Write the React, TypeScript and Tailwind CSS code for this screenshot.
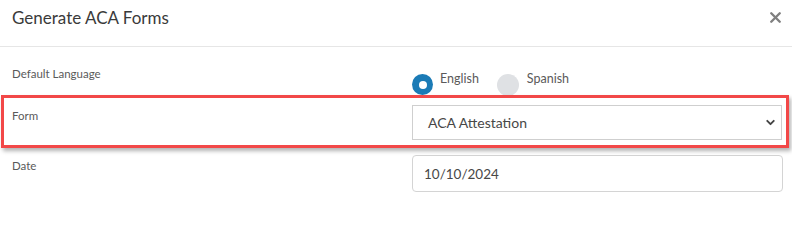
import { ChevronDown, X } from "lucide-react";

const App = () => {
  return (
    <div className="relative w-[792px] h-[204px] overflow-hidden bg-white font-['Lato',sans-serif] text-[#333]">
      {/* header */}
      <div className="flex h-[47px] items-start justify-between border-b border-[#e6e6e6] pl-3 pr-[8px] pt-[7px]">
        <h1 className="text-[17px] leading-[22px] text-[#3a3a3a]">Generate ACA Forms</h1>
        <X size={17} strokeWidth={3.4} className="mt-[2px] text-[#808080]" />
      </div>

      {/* body */}
      <div className="grid grid-cols-[400px_1fr] pl-3 pr-[9px] pt-[16px]">
        {/* language */}
        <div className="h-[42px] pt-[3px] text-[11.5px] leading-[15px] text-[#5a5a5a]">Default Language</div>
        <div className="flex h-[42px] items-start">
          <span className="mt-[11px] flex h-[21px] w-[21px] items-center justify-center rounded-full bg-[#1b7bb6]">
            <span className="h-[8px] w-[8px] rounded-full bg-white" />
          </span>
          <span className="ml-[7px] mt-[8px] text-[12.5px] leading-[16px] text-[#5a5a5a]">English</span>
          <span className="ml-[18px] mt-[11px] h-[22px] w-[22px] rounded-full bg-[#dfe1e4]" />
          <span className="ml-[8px] mt-[8px] text-[12.5px] leading-[16px] text-[#5a5a5a]">Spanish</span>
        </div>

        {/* form */}
        <div className="h-[50px] pt-[3px] text-[11.5px] leading-[15px] text-[#5a5a5a]">Form</div>
        <div className="h-[50px] pr-[1px]">
          <div className="flex h-[35px] items-center justify-between border border-[#cfcfcf] pl-[15px] pr-[4px]">
            <span className="text-[14px] text-[#474747]">ACA Attestation</span>
            <ChevronDown size={13} strokeWidth={3.5} className="text-[#444]" />
          </div>
        </div>

        {/* date */}
        <div className="pt-[3px] text-[11.5px] leading-[15px] text-[#5a5a5a]">Date</div>
        <div className="flex h-[37px] items-center rounded-[4px] border border-[#d4d4d4] pl-[11px] pt-[2px]">
          <span className="text-[13.5px] text-[#474747]">10/10/2024</span>
        </div>
      </div>

      {/* highlight annotation */}
      <div className="absolute left-[1px] top-[95px] h-[53px] w-[788px] border-[3px] border-[#f24848] shadow-[2px_3px_4px_rgba(0,0,0,0.3)]" />
    </div>
  );
};

export default App;
